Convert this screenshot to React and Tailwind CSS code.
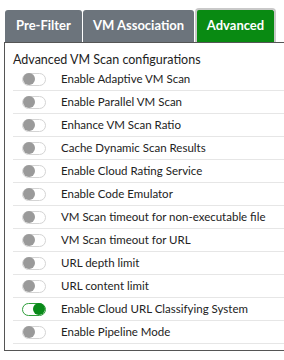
import React from 'react';

const settings = [
  { label: 'Enable Adaptive VM Scan', on: false },
  { label: 'Enable Parallel VM Scan', on: false },
  { label: 'Enhance VM Scan Ratio', on: false },
  { label: 'Cache Dynamic Scan Results', on: false },
  { label: 'Enable Cloud Rating Service', on: false },
  { label: 'Enable Code Emulator', on: false },
  { label: 'VM Scan timeout for non-executable file', on: false },
  { label: 'VM Scan timeout for URL', on: false },
  { label: 'URL depth limit', on: false },
  { label: 'URL content limit', on: false },
  { label: 'Enable Cloud URL Classifying System', on: true },
  { label: 'Enable Pipeline Mode', on: false },
];

const Toggle = ({ on }) => (
  <div
    className={
      on
        ? 'w-[24px] h-[13px] rounded-full border border-[#2e9e3a] bg-white flex items-center justify-end'
        : 'w-[24px] h-[13px] rounded-full border border-[#d4d4d4] bg-white flex items-center justify-start'
    }
  >
    <div className={on ? 'w-[12px] h-[12px] rounded-full bg-[#0a8a1a]' : 'w-[12px] h-[12px] rounded-full bg-[#9a9a9a]'} />
  </div>
);

const App = () => {
  return (
    <div className="w-[284px] h-[360px] bg-white font-['Lato',_sans-serif] text-[#222]">
      {/* Tabs */}
      <div className="flex items-end pl-[5px] pt-[8px] h-[42px]">
        <div className="w-[77px] h-[32px] bg-[#6c747c] rounded-t-[3px] flex items-center justify-center text-white font-bold text-[13px]">
          Pre-Filter
        </div>
        <div className="ml-[1px] w-[111px] h-[32px] bg-[#6c747c] rounded-t-[3px] flex items-center justify-center text-white font-bold text-[13px]">
          VM Association
        </div>
        <div className="ml-[1px] w-[81px] h-[34px] bg-[#098a12] border-2 border-b-0 border-[#c9c9c9] rounded-t-[4px] flex items-center justify-center text-white font-bold text-[13px]">
          Advanced
        </div>
      </div>

      {/* Panel */}
      <div className="ml-[4px] h-[309px] border-l border-t border-b border-[#555] pt-[9px]">
        <div className="pl-[8px] text-[12.5px] leading-[16px]">Advanced VM Scan configurations</div>
        <div className="ml-[8px]">
          {settings.map((s, i) => (
            <div key={i} className="h-[23px] flex items-center border-b border-[#e6e6e6]">
              <div className="pl-[9px] w-[48px]">
                <Toggle on={s.on} />
              </div>
              <span className="text-[11.5px]">{s.label}</span>
            </div>
          ))}
        </div>
      </div>
    </div>
  );
};

export default App;
